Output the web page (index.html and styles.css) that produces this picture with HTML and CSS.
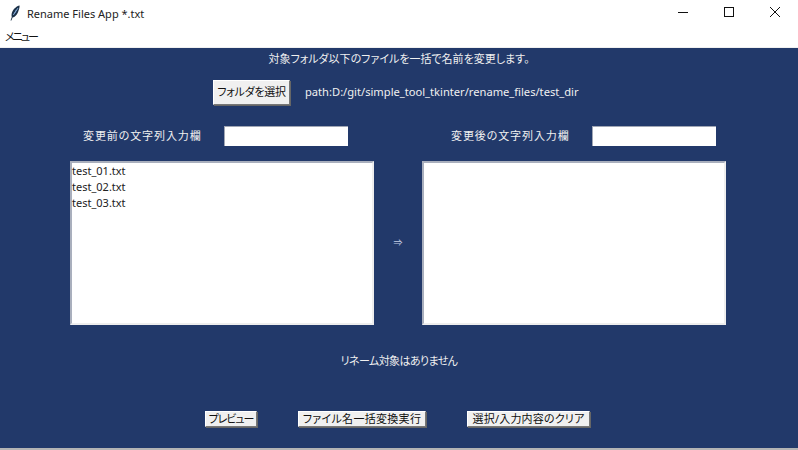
FILE: index.html
```html
<!DOCTYPE html>
<html lang="ja">
<head>
<meta charset="utf-8">
<title>Rename Files App</title>
<link rel="stylesheet" href="styles.css">
</head>
<body>
<div class="window">
  <header class="titlebar">
    <svg class="app-icon" width="12" height="16" viewBox="0 0 12 16"><path d="M10.6 0.6C7.6 1.2 4.3 4 3 7.6C2.4 9.4 2.4 10.8 2.8 11.9L1.5 15.4L2.4 15.6L3.6 12.5C5.8 12.2 7.8 10 9 7.2C10 4.8 10.7 2.6 10.6 0.6Z" fill="#1c3148"/><path d="M9 3L5.4 8.6M7.4 4.8L4.4 10" stroke="#7fa6d4" stroke-width="1" fill="none"/></svg>
    <span class="title-text">Rename Files App *.txt</span>
    <div class="controls">
      <svg class="ctl" width="46" height="27" viewBox="0 0 46 27"><path d="M18 12.5H28" stroke="#111" fill="none"/></svg>
      <svg class="ctl" width="46" height="27" viewBox="0 0 46 27"><rect x="18.5" y="7.5" width="9" height="9" stroke="#111" fill="none"/></svg>
      <svg class="ctl" width="46" height="27" viewBox="0 0 46 27"><path d="M18 7L28 17M28 7L18 17" stroke="#111" fill="none"/></svg>
    </div>
  </header>
  <nav class="menubar"><span>メニュー</span></nav>
  <main class="app">
    <p class="notice">対象フォルダ以下のファイルを一括で名前を変更します。</p>
    <div class="folder-row">
      <button class="btn btn-folder">フォルダを選択</button>
      <span class="path">path:D:/git/simple_tool_tkinter/rename_files/test_dir</span>
    </div>
    <div class="inputs-row">
      <div class="field"><label>変更前の文字列入力欄</label><input class="entry" type="text"></div>
      <div class="field"><label>変更後の文字列入力欄</label><input class="entry" type="text"></div>
    </div>
    <div class="lists-row">
      <div class="listbox">
        <div>test_01.txt</div>
        <div>test_02.txt</div>
        <div>test_03.txt</div>
      </div>
      <span class="arrow">⇒</span>
      <div class="listbox"></div>
    </div>
    <p class="status">リネーム対象はありません</p>
    <div class="actions">
      <button class="btn btn-small btn-preview">プレビュー</button>
      <button class="btn btn-small btn-run">ファイル名一括変換実行</button>
      <button class="btn btn-small btn-clear">選択/入力内容のクリア</button>
    </div>
  </main>
</div>
</body>
</html>
```
FILE: styles.css
```css
* { box-sizing: border-box; }
html, body { margin: 0; padding: 0; background: #fff; }
body {
  width: 798px;
  height: 450px;
  overflow: hidden;
  font: 11px/16px "Noto Sans", "Noto Sans CJK JP", sans-serif;
  font-feature-settings: "palt";
  color: #111;
}
.window { display: flex; flex-direction: column; height: 450px; background: #b4b4b4; }
.titlebar { height: 27px; display: flex; align-items: center; padding-left: 9px; background: #fff; }
.app-icon { flex: none; margin-top: -2px; }
.title-text { margin-left: 6px; font-size: 11px; color: #222; }
.controls { margin-left: auto; display: flex; }
.ctl { display: block; }
.menubar { height: 21px; padding: 1px 0 0 5px; background: #fff; border-bottom: 1px solid #f0f0f0; font-size: 11px; line-height: 17px; letter-spacing: -2px; }
.app { height: 400px; background: #22396a; color: #f0f0f0; display: flex; flex-direction: column; }
.notice { margin: 3px 0 0; text-align: center; height: 16px; }
.folder-row { display: flex; align-items: center; margin-top: 12px; padding-left: 213px; height: 26px; }
.path { margin-left: 15px; font-size: 11.15px; }
.btn {
  font: inherit;
  font-feature-settings: "palt";
  color: #111;
  padding: 0;
  background: #f0f0f0;
  border: 1px solid;
  border-color: #fff #777 #777 #fff;
  box-shadow: 1px 1px 0 #666;
  white-space: nowrap;
}
.btn-folder { width: 77px; height: 25px; border-radius: 0; letter-spacing: -0.3px; }
.inputs-row { display: flex; margin-top: 21px; height: 20px; padding-left: 83px; }
.field { display: flex; flex: none; align-items: center; width: 368px; }
.field label { width: 141px; letter-spacing: 0.9px; }
.entry { width: 124px; height: 20px; padding: 0; background: #fff; border: 1px solid #a0a6b4; border-width: 1px 0 0 1px; }
.lists-row { display: flex; align-items: center; margin-top: 15px; padding-left: 70px; height: 164px; }
.listbox { width: 304px; height: 164px; background: #fff; color: #222; border: 2px solid #a9afbd; border-right-color: #eee; border-bottom-color: #eee; padding: 0; font-size: 11px; line-height: 16px; }
.arrow { width: 48px; text-align: center; font-size: 9px; color: #c6d0e6; }
.status { margin: 28px 0 0; height: 16px; text-align: center; letter-spacing: -0.6px; }
.actions { display: flex; margin-top: 42px; padding-left: 205px; }
.btn-small { height: 16px; line-height: 14px; }
.btn-preview { width: 52px; letter-spacing: -1.1px; }
.btn-run { width: 128px; margin-left: 41px; letter-spacing: 0.3px; }
.btn-clear { width: 123px; margin-left: 41px; letter-spacing: 0.2px; }
```
